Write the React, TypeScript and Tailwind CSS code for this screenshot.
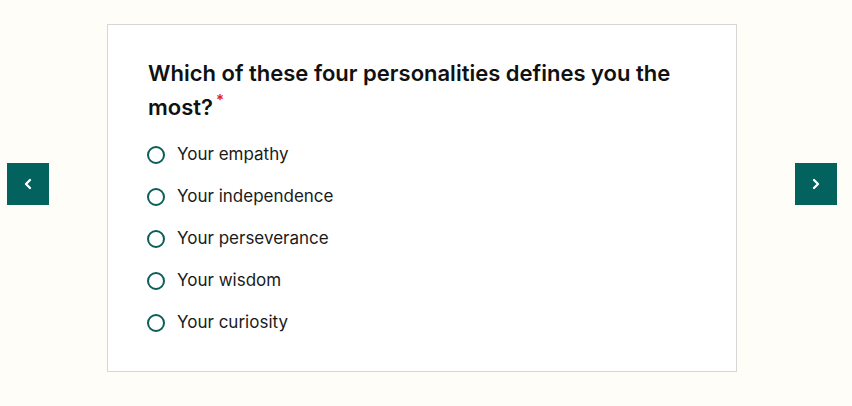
import { ChevronLeft, ChevronRight } from 'lucide-react';

const options = [
  'Your empathy',
  'Your independence',
  'Your perseverance',
  'Your wisdom',
  'Your curiosity',
];

export default function App() {
  return (
    <div
      className="min-h-screen w-full bg-[#fffdf8] flex items-start pt-[24px] pl-[7px]"
      style={{ fontFamily: 'Inter, "Open Sans", sans-serif' }}
    >
      <button className="mt-[139px] w-[42px] h-[42px] bg-[#03625e] flex items-center justify-center text-white shrink-0">
        <ChevronLeft size={16} strokeWidth={3.5} />
      </button>

      <div className="ml-[58px] w-[630px] h-[348px] shrink-0 bg-white border border-[#d6d6d6] pl-[40px] pr-[40px] pt-[31px]">
        <h2 className="text-[22px] leading-[34px] font-semibold text-[#111]">
          Which of these four personalities defines you the most?
          <span className="inline-block align-top text-[#e0201b] text-[15px] leading-none ml-[3px] mt-[2px]">*</span>
        </h2>
        <div className="mt-[10px] flex flex-col">
          {options.map((o) => (
            <label key={o} className="h-[42px] flex items-center gap-[12px] cursor-pointer">
              <span className="w-[18px] h-[18px] rounded-full border-2 border-[#0d5e5a] shrink-0 -ml-px" />
              <span className="text-[17px] text-[#1a1a1a]">{o}</span>
            </label>
          ))}
        </div>
      </div>

      <button className="ml-[58px] mt-[139px] w-[42px] h-[42px] bg-[#03625e] flex items-center justify-center text-white shrink-0">
        <ChevronRight size={16} strokeWidth={3.5} />
      </button>
    </div>
  );
}
